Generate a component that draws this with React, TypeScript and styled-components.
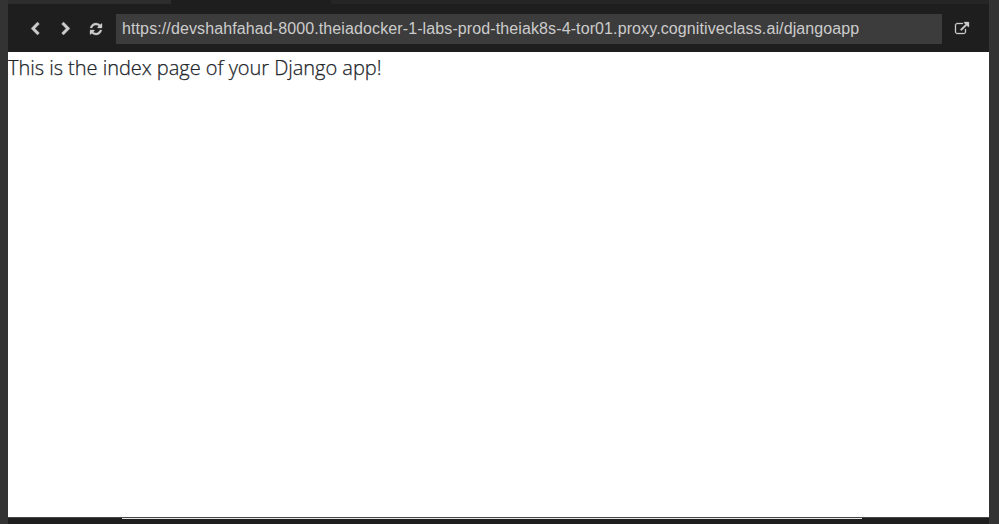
import React from "react";
import styled, { createGlobalStyle } from "styled-components";

const GlobalStyle = createGlobalStyle`
  body { margin: 0; background: #1e1e1e; }
  *, *::before, *::after { box-sizing: border-box; }
`;

const Window = styled.div`
  display: flex;
  width: 999px;
  height: 524px;
  overflow: hidden;
  background: #1e1e1e;
`;

const Edge = styled.div<{ $width: number }>`
  flex: 0 0 ${(p) => p.$width}px;
  background: #333333;
`;

const Preview = styled.main`
  flex: 1;
  min-width: 0;
  display: flex;
  flex-direction: column;
`;

const TabStrip = styled.div`
  display: flex;
  height: 4px;
  background: #252526;
`;

const Tab = styled.div<{ $width: number; $active?: boolean }>`
  width: ${(p) => p.$width}px;
  background: ${(p) => (p.$active ? "#1e1e1e" : "#2d2d2d")};
`;

const Toolbar = styled.header`
  display: flex;
  align-items: center;
  height: 48px;
  padding: 2px 20px 0 20px;
`;

const IconButton = styled.button<{ $gap: number }>`
  display: flex;
  width: 14px;
  height: 14px;
  margin: 0 ${(p) => p.$gap}px 0 0;
  padding: 0;
  border: 0;
  background: none;
  color: #cccccc;
`;

const Glyph = styled.svg`
  display: block;
  width: 14px;
  height: 14px;
  flex: none;
  fill: currentColor;
  stroke: currentColor;
  stroke-width: 40;
  overflow: visible;
`;

const Address = styled.div`
  width: 826px;
  height: 30px;
  margin-right: 13px;
  padding-left: 6px;
  background: #3c3c3c;
  color: #cccccc;
  font: 16px/29px "Liberation Sans", Arial, sans-serif;
  letter-spacing: 0.11px;
  white-space: nowrap;
`;

const Page = styled.section`
  flex: 1;
  background: #ffffff;
  color: #212529;
`;

const Message = styled.p`
  margin: 0;
  padding-top: 1px;
  font: 300 20px/30px "Open Sans", "Segoe UI", sans-serif;
  letter-spacing: -0.03px;
  -webkit-text-stroke: 0.25px currentColor;
  white-space: nowrap;
`;

const Footer = styled.footer`
  height: 7px;
  border-top: 1px solid #474747;
  padding: 0 127px 0 114px;
`;

const PanelLine = styled.div`
  height: 2px;
  border-top: 1px solid #e4e4e4;
`;

const icons = {
  back: "M1427 301l-531 531 531 531q19 19 19 45t-19 45l-166 166q-19 19-45 19t-45-19l-742-742q-19-19-19-45t19-45l742-742q19-19 45-19t45 19l166 166q19 19 19 45t-19 45z",
  forward: "M1363 877l-742 742q-19 19-45 19t-45-19l-166-166q-19-19-19-45t19-45l531-531-531-531q-19-19-19-45t19-45l166-166q19-19 45-19t45 19l742 742q19 19 19 45t-19 45z",
  refresh: "M1639 1056q0 5-1 7-64 268-268 434.5t-478 166.5q-146 0-282.5-55t-243.5-157l-129 129q-19 19-45 19t-45-19-19-45v-448q0-26 19-45t45-19h448q26 0 45 19t19 45-19 45l-137 137q71 66 161 102t187 36q134 0 250-65t186-179q11-17 53-117 8-23 30-23h192q13 0 22.5 9.5t9.5 22.5zm25-800v448q0 26-19 45t-45 19h-448q-26 0-45-19t-19-45 19-45l138-138q-148-137-349-137-134 0-250 65t-186 179q-11 17-53 117-8 23-30 23h-199q-13 0-22.5-9.5t-9.5-22.5v-7q65-268 270-434.5t480-166.5q146 0 284 55.5t245 156.5l130-129q19-19 45-19t45 19 19 45z",
  open: "M1408 928v320q0 119-84.5 203.5t-203.5 84.5h-832q-119 0-203.5-84.5t-84.5-203.5v-832q0-119 84.5-203.5t203.5-84.5h704q14 0 23 9t9 23v64q0 14-9 23t-23 9h-704q-66 0-113 47t-47 113v832q0 66 47 113t113 47h832q66 0 113-47t47-113v-320q0-14 9-23t23-9h64q14 0 23 9t9 23zm384-864v512q0 26-19 45t-45 19-45-19l-176-176-652 652q-10 10-23 10t-23-10l-114-114q-10-10-10-23t10-23l652-652-176-176q-19-19-19-45t19-45 45-19h512q26 0 45 19t19 45z",
};

function ToolButton({ icon, label, gap = 0 }: { icon: keyof typeof icons; label: string; gap?: number }) {
  return (
    <IconButton type="button" aria-label={label} $gap={gap}>
      <Glyph viewBox="0 0 1792 1792" aria-hidden="true">
        <path d={icons[icon]} />
      </Glyph>
    </IconButton>
  );
}

export default function App() {
  return (
    <>
      <GlobalStyle />
      <Window>
        <Edge $width={8} />
        <Preview>
          <TabStrip>
            <Tab $width={163} />
            <Tab $width={160} $active />
          </TabStrip>
          <Toolbar>
            <ToolButton icon="back" label="Back" gap={16.5} />
            <ToolButton icon="forward" label="Forward" gap={16.5} />
            <ToolButton icon="refresh" label="Reload" gap={13} />
            <Address>https://devshahfahad-8000.theiadocker-1-labs-prod-theiak8s-4-tor01.proxy.cognitiveclass.ai/djangoapp</Address>
            <ToolButton icon="open" label="Open in a new window" />
          </Toolbar>
          <Page>
            <Message>This is the index page of your Django app!</Message>
          </Page>
          <Footer>
            <PanelLine />
          </Footer>
        </Preview>
        <Edge $width={10} />
      </Window>
    </>
  );
}
